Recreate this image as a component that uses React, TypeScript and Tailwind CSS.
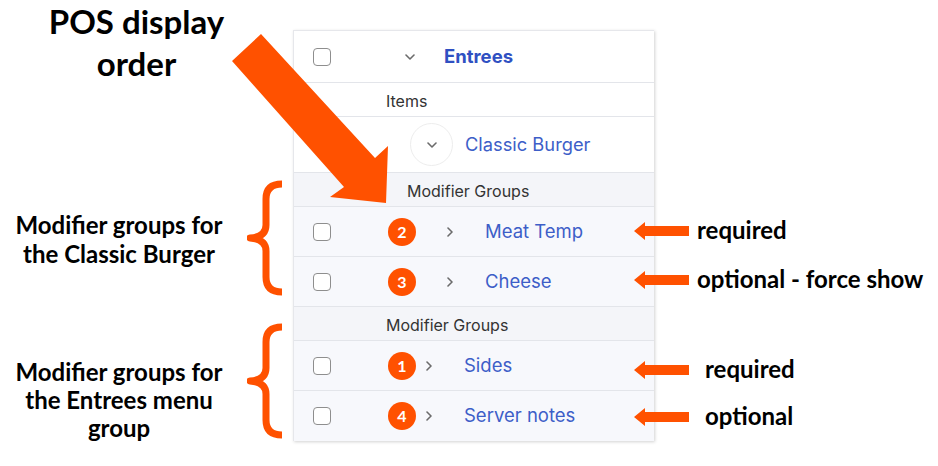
import React from "react";

const ORANGE = "#ff5100";

function Checkbox() {
  return <div className="w-[18px] h-[18px] rounded-[4px] border-[1.5px] border-[#8e8e8e] bg-white shrink-0" />;
}

function ChevronDown() {
  return (
    <svg width="10" height="6" viewBox="0 0 10 6" className="shrink-0">
      <path d="M1 1 L5 5 L9 1" fill="none" stroke="#6b6b6b" strokeWidth="1.6" strokeLinecap="round" strokeLinejoin="round" />
    </svg>
  );
}

function ChevronRight() {
  return (
    <svg width="6" height="10" viewBox="0 0 6 10" className="shrink-0">
      <path d="M1 1 L5 5 L1 9" fill="none" stroke="#6b6b6b" strokeWidth="1.6" strokeLinecap="round" strokeLinejoin="round" />
    </svg>
  );
}

function Badge({ n }: { n: string }) {
  return (
    <div className="w-[28px] h-[28px] rounded-full bg-[#ff5100] text-white flex items-center justify-center text-[16px] font-bold shrink-0 [font-family:Lato,'Noto_Sans',sans-serif]">
      {n}
    </div>
  );
}

function Brace() {
  return (
    <svg width="38" height="116" viewBox="0 0 38 116" className="shrink-0">
      <path
        d="M35 4 Q19 4 19 19 L19 45 Q19 57 3 58 Q19 59 19 71 L19 97 Q19 112 35 112"
        fill="none"
        stroke={ORANGE}
        strokeWidth="7"
        strokeLinejoin="round"
      />
    </svg>
  );
}

function SmallArrow() {
  return (
    <svg width="55" height="18" viewBox="0 0 55 18" className="shrink-0">
      <polygon points="0,9 11,0 11,4 55,4 55,14 11,14 11,18" fill={ORANGE} />
    </svg>
  );
}

function ModRow({ n, name, deep, last }: { n: string; name: string; deep: boolean; last?: boolean }) {
  return (
    <div className={`h-[50px] bg-[#f7f8fc] flex items-center pl-[19px] ${last ? "" : "border-b border-[#e3e5ea]"}`}>
      <Checkbox />
      <div className="ml-[57px]">
        <Badge n={n} />
      </div>
      <div className={deep ? "ml-[31px]" : "ml-[10px]"}>
        <ChevronRight />
      </div>
      <span className="ml-[32px] text-[18.5px] text-[#3d5ec8]">{name}</span>
    </div>
  );
}

function Note({ text, gap, mt }: { text: string; gap: string; mt: string }) {
  return (
    <div className={`h-[24px] flex items-center ${mt}`}>
      <SmallArrow />
      <span className={`${gap} text-[24px] leading-[24px] -mt-[3px] font-bold text-black whitespace-nowrap`}>{text}</span>
    </div>
  );
}

export default function App() {
  return (
    <div className="relative w-[938px] h-[466px] bg-white overflow-hidden flex [font-family:Lato,'Noto_Sans',sans-serif]">
      {/* left annotations */}
      <div className="w-[293px] shrink-0 flex flex-col">
        <div className="w-[273px] text-center text-[33px] leading-[42px] font-bold text-black">
          POS display
          <br />
          order
        </div>
        <div className="mt-[96px] flex items-start">
          <div className="w-[238px] mt-[30px] text-center text-[24px] leading-[29px] font-bold text-black">
            Modifier groups for
            <br />
            the Classic Burger
          </div>
          <div className="ml-[9px]">
            <Brace />
          </div>
        </div>
        <div className="mt-[27px] flex items-start">
          <div className="w-[238px] mt-[35px] text-center text-[24px] leading-[28px] font-bold text-black">
            Modifier groups for
            <br />
            the Entrees menu
            <br />
            group
          </div>
          <div className="ml-[9px]">
            <Brace />
          </div>
        </div>
      </div>

      {/* panel */}
      <div className="w-[361px] shrink-0 self-start mt-[30px] bg-white border-l border-t border-[#e6e7eb] shadow-[1px_1px_3px_rgba(0,0,0,0.18)] [font-family:Inter,Roboto,sans-serif]">
        <div className="h-[52px] flex items-center pl-[19px] border-b border-[#e3e5ea]">
          <Checkbox />
          <div className="ml-[74px]">
            <ChevronDown />
          </div>
          <span className="ml-[29px] text-[18.5px] font-bold text-[#2f50c2]">Entrees</span>
        </div>
        <div className="h-[34px] flex items-center pt-[3px] pl-[92px] border-b border-[#e3e5ea] text-[16px] text-[#333]">Items</div>
        <div className="h-[56px] flex items-center pl-[116px] border-b border-[#e3e5ea]">
          <div className="w-[43px] h-[43px] rounded-full border border-[#ededed] flex items-center justify-center">
            <ChevronDown />
          </div>
          <span className="ml-[12px] text-[18.3px] text-[#3d5ec8]">Classic Burger</span>
        </div>
        <div className="h-[34px] flex items-center pt-[2px] pl-[113px] bg-[#f4f5f9] border-b border-[#e3e5ea] text-[16px] text-[#333]">
          Modifier Groups
        </div>
        <ModRow n="2" name="Meat Temp" deep />
        <ModRow n="3" name="Cheese" deep />
        <div className="h-[34px] flex items-center pt-[2px] pl-[92px] bg-[#f4f5f9] border-b border-[#e3e5ea] text-[16px] text-[#333]">
          Modifier Groups
        </div>
        <ModRow n="1" name="Sides" deep={false} />
        <ModRow n="4" name="Server notes" deep={false} last />
      </div>

      {/* right annotations */}
      <div className="-ml-[20px] relative z-10 flex flex-col">
        <Note text="required" gap="ml-[8px]" mt="mt-[219px]" />
        <Note text="optional - force show" gap="ml-[8px]" mt="mt-[25px]" />
        <Note text="required" gap="ml-[16px]" mt="mt-[66px]" />
        <Note text="optional" gap="ml-[16px]" mt="mt-[23px]" />
      </div>

      {/* big arrow overlay */}
      <svg className="absolute left-0 top-0 pointer-events-none" width="938" height="466" viewBox="0 0 938 466">
        <polygon points="261,34 375,158 388,146 386,203 330,197 344,187 232,61" fill={ORANGE} />
      </svg>
    </div>
  );
}
